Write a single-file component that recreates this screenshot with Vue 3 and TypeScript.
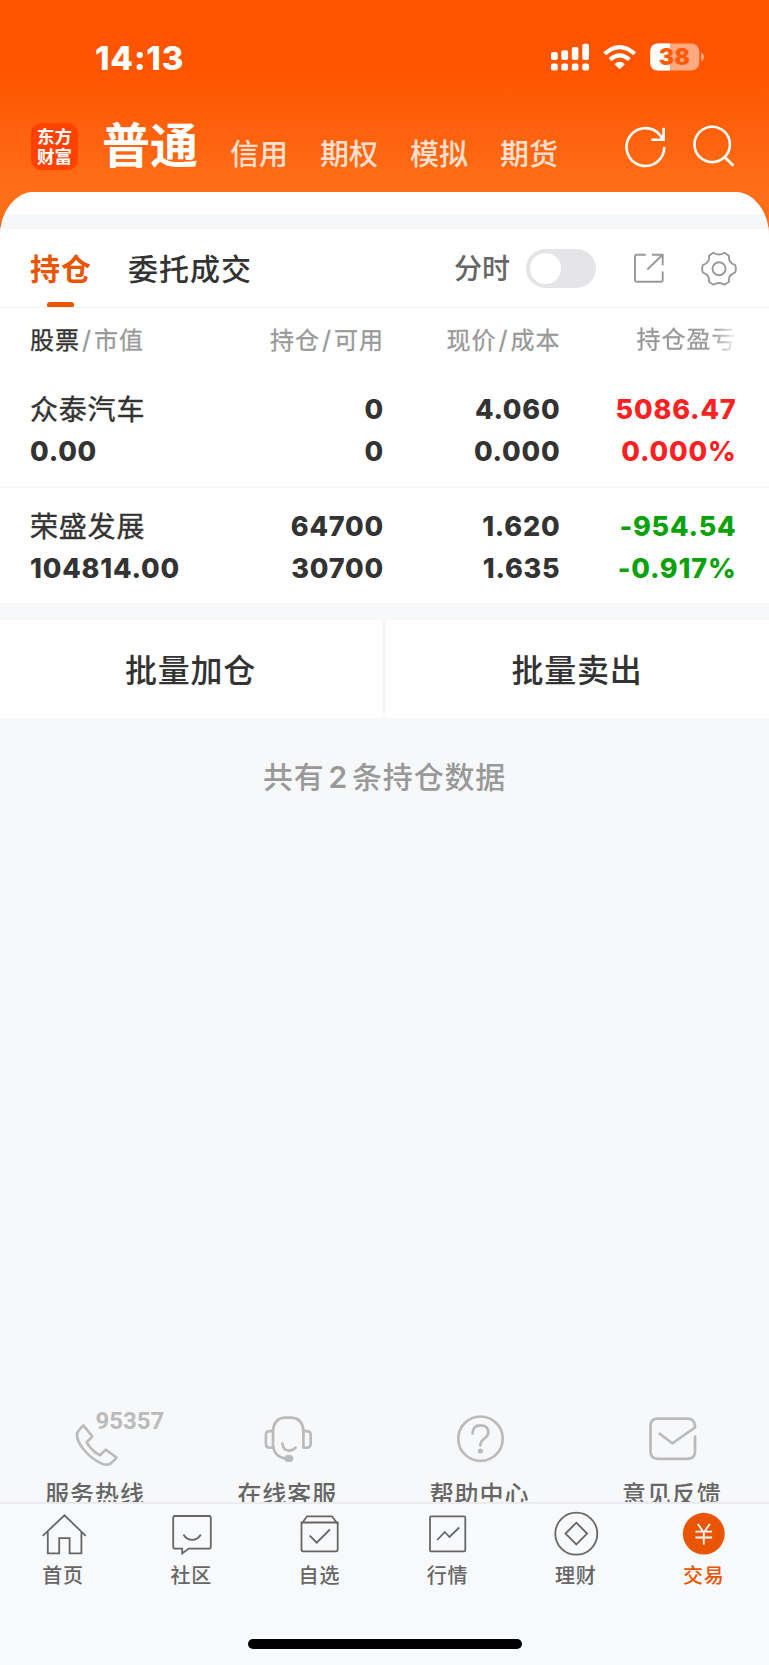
<script setup lang="ts">
import { ref } from 'vue'

interface Holding {
  name: string
  value: string
  held: string
  available: string
  price: string
  cost: string
  profit: string
  rate: string
  trend: 'up' | 'down'
}

const accounts = ['信用', '期权', '模拟', '期货']

const holdings: Holding[] = [
  { name: '众泰汽车', value: '0.00', held: '0', available: '0', price: '4.060', cost: '0.000', profit: '5086.47', rate: '0.000%', trend: 'up' },
  { name: '荣盛发展', value: '104814.00', held: '64700', available: '30700', price: '1.620', cost: '1.635', profit: '-954.54', rate: '-0.917%', trend: 'down' },
]

const support = [
  {
    label: '服务热线',
    d: 'M83.5 30.5L92.2 41.3Q92 42 86.6 47.3Q92 56.500 100 60.300L105.600 54.600L116.600 62.500Q116 64 110.500 68.500Q107 70.700 102 68.700Q92 64.500 84 55Q76.500 46 77 38.500Q78 35.500 83.500 30.500Z',
  },
  {
    label: '在线客服',
    d: 'M81 51V38Q81 22.700 94 22.700H98.400Q111.400 22.700 111.400 38V52.500M81 50Q82 62 94 63.500M81 36.200H78Q73.900 36.200 73.900 40V48.700Q73.900 52.600 78 52.600H81M111.400 36.200H114.500Q118.700 36.200 118.700 40V48.700Q118.700 52.600 114.500 52.600H111.400M90.400 48.500Q91 55.500 97 55.700Q101 55.600 103.500 52.700',
  },
  {
    label: '帮助中心',
    d: 'M117.700 43.700A22.200 22.200 0 1 1 73.300 43.700A22.200 22.200 0 1 1 117.700 43.700M87.600 38.500Q87.600 30.300 95.500 30.300Q103.300 30.300 103.300 37.500Q103.300 40.500 99.300 43.700Q95.400 46.500 95.400 50.500',
  },
  {
    label: '意见反馈',
    d: 'M82.700 38.700L95.300 48.300L118 32.500V31Q117.500 23.700 110.500 23.700H81Q73.500 23.700 73.500 31V56.500Q73.500 63.800 81 63.800H110.500Q118 63.800 118 56.500V41.500',
  },
]

const tabs = [
  { label: '首页', d: 'M42.700 30.800L64.500 10.300L85.700 30.800M47.800 27V48.300H59.200V33.200H69.600V48.300H81.400V27' },
  { label: '社区', d: 'M47 11H81Q82.800 11 82.800 13V41.700Q82.800 43.600 81 43.600H60.800L54.200 48.400V43.600H47Q45.200 43.600 45.200 41.700V13Q45.200 11 47 11ZM55.500 29.500Q58.500 34.800 64.200 34.800Q69.800 34.800 72.800 29.500' },
  { label: '自选', d: 'M45.500 19L51 11.300H76L81.700 19M45.500 17.500H81.700V44.500Q81.700 46.300 80 46.300H47.200Q45.500 46.300 45.500 44.500ZM53.700 30.700L60.700 37.700L73.900 24.500' },
  { label: '行情', d: 'M47 11.300H80.200Q81.300 11.300 81.300 12.700V45Q81.300 46.300 80.200 46.300H47Q46 46.300 46 45V12.700Q46 11.300 47 11.300ZM53.200 35L60.800 27L65.500 32L75.200 22.500' },
  { label: '理财', d: 'M84.300 28.700A21 21 0 1 1 42.300 28.700A21 21 0 1 1 84.300 28.700M63.300 17.700L74.100 28.600L63.300 39.500L52.500 28.600Z' },
  { label: '交易', d: '' },
]

const activeTab = ref('交易')
const minuteChart = ref(false)
</script>

<template>
  <div class="screen">
    <header class="top">
      <div class="status">
        <span class="clock">14:13</span>
        <svg class="status-icons" width="170" height="42" viewBox="0 0 170 42">
          <g fill="#fff">
            <rect x="1" y="22" width="6.800" height="8" rx="2" />
            <rect x="11.300" y="20.300" width="6.800" height="9.700" rx="2" />
            <rect x="21.800" y="17" width="6.600" height="13" rx="2" />
            <rect x="32.300" y="13.800" width="6.700" height="16.200" rx="2" />
            <rect x="1" y="33.500" width="6.800" height="7" rx="2" />
            <rect x="11.300" y="33.500" width="6.800" height="7" rx="2" />
            <rect x="21.800" y="33.500" width="6.600" height="7" rx="2" />
            <rect x="32.300" y="33.500" width="6.700" height="7" rx="2" />
            <path d="M69.700 39.300L64.500 34.200Q69.700 29.500 74.900 34.200Z" />
          </g>
          <path d="M54.700 23.800Q69.700 10.300 84.700 23.800M60 29.600Q69.700 21.200 79.400 29.600" fill="none" stroke="#fff" stroke-width="4" />
          <rect x="100.300" y="13.500" width="49" height="27" rx="8" fill="#ffaa80" />
          <path d="M120 13.500H108.300Q100.300 13.500 100.300 21.500V32.500Q100.300 40.500 108.300 40.500H120Z" fill="#fff" />
          <path d="M151 23Q154 24 154 27Q154 30 151 31Z" fill="#ffaa80" />
          <text x="124.300" y="35.400" text-anchor="middle" class="battery">38</text>
        </svg>
      </div>
      <nav class="account">
        <div class="logo"><span>东方</span><span>财富</span></div>
        <b class="current">普通</b>
        <a v-for="a in accounts" :key="a" class="other">{{ a }}</a>
        <svg class="actions" width="120" height="50" viewBox="0 0 120 50" fill="none" stroke="#fff" stroke-width="2.600">
          <path d="M44.300 27A18.900 18.900 0 1 1 39.800 14.800L43 19M43.600 7.800V19.700H31.300" />
          <circle cx="92.200" cy="24.400" r="17.700" />
          <path d="M104.500 37L113.500 45.700" stroke-width="2.900" />
        </svg>
      </nav>
    </header>

    <main class="sheet">
      <div class="gap"></div>
      <div class="tools">
        <span class="tool active">持仓</span>
        <span class="tool">委托成交</span>
        <span class="minute">分时</span>
        <button class="switch" :class="{ on: minuteChart }" @click="minuteChart = !minuteChart"><i></i></button>
        <svg class="tool-icons" width="110" height="40" viewBox="0 0 110 40" fill="none" stroke="#999" stroke-width="1.900">
          <path d="M17.800 5.800H8.500Q7 5.800 7 7.300V31.300Q7 32.800 8.500 32.800H33.300Q34.700 32.800 34.700 31.300V22.500M24 5.800H34.700V16.500M34.400 6L19.300 20.500" />
          <path d="M85.300 3.700Q91 7.300 96.500 3.700L101 6.700Q100.700 9.500 101.600 12Q103 14.500 107.200 16.200Q108.500 19.700 107.200 23.300Q103 25 101.600 27.700Q100.700 30 101 32.800L96.500 35.700Q91 32.300 85.300 35.700L81 32.800Q81.300 30 80.400 27.700Q79 25 74.800 23.300Q73.500 19.700 74.800 16.200Q79 14.500 80.400 12Q81.300 9.500 81 6.700Z" stroke-linejoin="round" />
          <circle cx="91" cy="19.700" r="6.500" />
        </svg>
      </div>

      <section class="table">
        <div class="row heading">
          <span class="cell"><em>股票</em><s>/</s>市值</span>
          <span class="cell">持仓<s>/</s>可用</span>
          <span class="cell">现价<s>/</s>成本</span>
          <span class="cell fade">持仓盈亏</span>
        </div>
        <div v-for="h in holdings" :key="h.name" class="row holding">
          <div class="cell"><span class="name">{{ h.name }}</span><span>{{ h.value }}</span></div>
          <div class="cell"><span>{{ h.held }}</span><span>{{ h.available }}</span></div>
          <div class="cell"><span>{{ h.price }}</span><span>{{ h.cost }}</span></div>
          <div class="cell" :class="h.trend"><span>{{ h.profit }}</span><span>{{ h.rate }}</span></div>
        </div>
      </section>

      <div class="batch">
        <button>批量加仓</button>
        <button>批量卖出</button>
      </div>

      <p class="count">共有<span>2</span>条持仓数据</p>

      <section class="support">
        <div v-for="(s, i) in support" :key="s.label" class="help">
          <svg width="192" height="80" viewBox="0 0 192 80" fill="none" stroke="#bbb" stroke-width="2.700" stroke-linecap="round" stroke-linejoin="round">
            <path :d="s.d" />
            <text v-if="i === 0" x="95.500" y="33.700" class="hotline">95357</text>
            <rect v-if="i === 1" x="92.300" y="60" width="9" height="7" rx="3.500" fill="#bbb" stroke="none" />
            <circle v-if="i === 2" cx="95.400" cy="56" r="2.600" fill="#bbb" stroke="none" />
          </svg>
          <span>{{ s.label }}</span>
        </div>
      </section>
    </main>

    <footer class="bottom">
      <nav class="tabs">
        <a v-for="t in tabs" :key="t.label" class="tab" :class="{ active: t.label === activeTab }" @click="activeTab = t.label">
          <svg width="128" height="55" viewBox="0 0 128 55" fill="none" stroke="currentColor" stroke-width="1.800">
            <path v-if="t.d" :d="t.d" />
            <template v-else>
              <circle cx="62.800" cy="28.700" r="20.900" fill="currentColor" stroke="none" />
              <path d="M56.800 19L62.800 27.500L68.800 19M62.800 26.500V39.500M54.500 26.700H71.100M54.500 32.500H71.100" stroke="#fff" />
            </template>
          </svg>
          <span>{{ t.label }}</span>
        </a>
      </nav>
      <div class="home-bar"></div>
    </footer>
  </div>
</template>

<style>
body {
  margin: 0;
}
</style>

<style scoped>
.screen {
  width: 769px;
  height: 1665px;
  display: flex;
  flex-direction: column;
  overflow: hidden;
  background: linear-gradient(#ff5500 75px, #ff6f1a 195px, #ff6f1a 240px, #f7f8fa 240px);
  font-family: Inter, "Noto Sans CJK SC", sans-serif;
  color: #333;
}
.screen svg {
  display: block;
  flex: none;
}
.top {
  height: 191.700px;
  flex: none;
}
.status {
  height: 116px;
  display: flex;
  justify-content: space-between;
  box-sizing: border-box;
  padding: 30px 49px 0 95px;
}
.clock {
  height: 56px;
  line-height: 56px;
  font-size: 33px;
  font-weight: 800;
  letter-spacing: 0.800px;
  color: #fff;
}
.battery {
  font: 900 23px Inter, sans-serif;
  fill: #ff5a08;
}
.account {
  display: flex;
  color: #fff;
  height: 75px;
  padding-left: 31px;
}
.logo {
  width: 47px;
  height: 47px;
  margin-top: 7px;
  box-sizing: border-box;
  padding-top: 4px;
  border-radius: 10px;
  background: #ff4200;
  display: flex;
  flex-direction: column;
  align-items: center;
  font-size: 17.500px;
  font-weight: 700;
  line-height: 19.500px;
}
.current {
  width: 128px;
  margin-left: 24px;
  padding-top: 2px;
  font-size: 48px;
  font-weight: 600;
  line-height: 56px;
}
.other {
  width: 90px;
  padding-top: 17px;
  font-size: 29px;
  font-weight: 500;
  line-height: 44px;
  color: #ffe0d0;
}
.actions {
  margin-left: 30px;
  margin-top: 4px;
}
.sheet {
  height: 1310.300px;
  flex: none;
  border-radius: 34px 34px 0 0 / 44px 44px 0 0;
  overflow: hidden;
  background: #f7f8fa;
  display: flex;
  flex-direction: column;
}
.gap {
  height: 37.300px;
  flex: none;
  background: linear-gradient(#fff 22px, #f6f7f9 22px);
}
.tools {
  height: 79px;
  flex: none;
  box-sizing: border-box;
  border-bottom: 1px solid #f1f1f3;
  background: #fff;
  display: flex;
  padding-left: 30px;
  align-items: flex-start;
}
.tool {
  position: relative;
  height: 78px;
  margin-right: 36px;
  font-size: 30px;
  letter-spacing: 1px;
  font-weight: 500;
  line-height: 80px;
}
.tool.active {
  color: #ea5504;
  font-weight: 700;
}
.tool.active::after {
  content: "";
  position: absolute;
  left: 17px;
  bottom: 0;
  width: 27px;
  height: 5px;
  border-radius: 3px 3px 1px 1px;
  background: #ea5504;
}
.minute {
  width: 72px;
  margin-left: auto;
  font-size: 28px;
  line-height: 80px;
  font-weight: 500;
  color: #666;
}
.switch {
  width: 70px;
  height: 39px;
  margin: 20px 32px 0 0;
  padding: 4px;
  border: 0;
  border-radius: 20px;
  background: #e5e5e7;
}
.switch i {
  display: block;
  width: 31px;
  height: 31px;
  border-radius: 50%;
  background: #fff;
}
.switch.on i {
  margin-left: auto;
}
.tool-icons {
  margin-top: 20px;
  margin-right: 31px;
}
.table {
  flex: none;
}
.row {
  display: grid;
  grid-template-columns: 173px 181px 176.500px 176px;
  padding-left: 30px;
  background: #fff;
}
.cell {
  text-align: right;
  white-space: nowrap;
}
.cell:first-child {
  text-align: left;
}
.heading {
  height: 63px;
  font-size: 24px;
  letter-spacing: 1px;
  line-height: 64px;
  color: #999;
  -webkit-text-stroke: 0.300px;
}
.heading em {
  font-style: normal;
  color: #333;
}
.heading s {
  text-decoration: none;
  font-size: 25px;
  margin: 0 2px;
}
.fade {
  mask-image: linear-gradient(90deg, #000 86%, transparent 101%);
}
.holding {
  height: 117px;
  box-sizing: border-box;
  padding-top: 18px;
  border-bottom: 2px solid #f7f8fa;
}
.holding .cell {
  display: flex;
  flex-direction: column;
  font-size: 27px;
  font-weight: 800;
  letter-spacing: 0.800px;
  line-height: 42.300px;
}
.holding .name {
  font-size: 28px;
  font-weight: 400;
  -webkit-text-stroke: 0.400px;
}
.up {
  color: #fa2222;
}
.down {
  color: #0aa10a;
}
.batch {
  height: 98px;
  flex: none;
  margin-top: 15px;
  display: grid;
  grid-template-columns: 382px 383px;
  gap: 4px;
}
.batch button {
  box-sizing: border-box;
  height: 98px;
  padding: 4px 1px 0 0;
  border: 0;
  background: #fff;
  font: 500 32px/94px Inter, "Noto Sans CJK SC", sans-serif;
  letter-spacing: 0.800px;
  color: #333;
}
.count {
  margin: 0;
  height: 118px;
  text-align: center;
  font-size: 30px;
  font-weight: 500;
  letter-spacing: 0.800px;
  line-height: 118px;
  color: #999;
}
.count span {
  margin: 0 4px;
  font-weight: 600;
}
.support {
  margin-top: auto;
  height: 107px;
  flex: none;
  display: grid;
  grid-template-columns: repeat(4, 192.250px);
}
.help {
  text-align: center;
  font-size: 24px;
  font-weight: 500;
  letter-spacing: 1px;
  line-height: 40px;
  color: #666;
}
.help span {
  display: block;
  padding-right: 2px;
}
.hotline {
  font: 700 24px Roboto, sans-serif;
  letter-spacing: 0;
  fill: #bbb;
  stroke: none;
}
.bottom {
  height: 163px;
  box-sizing: border-box;
  border-top: 2px solid #ebebed;
  background: #f8f9fb;
}
.tabs {
  height: 135px;
  display: grid;
  grid-template-columns: repeat(6, 128.170px);
  padding-top: 1px;
  box-sizing: border-box;
}
.tab {
  text-align: center;
  font-size: 20px;
  font-weight: 500;
  letter-spacing: 0.800px;
  line-height: 32px;
  color: #666;
}
.tab span {
  display: block;
  padding-right: 2px;
}
.tab.active {
  color: #ea5504;
}
.home-bar {
  width: 274px;
  height: 10px;
  margin: 0 auto;
  border-radius: 5px;
  background: #000;
}
</style>
